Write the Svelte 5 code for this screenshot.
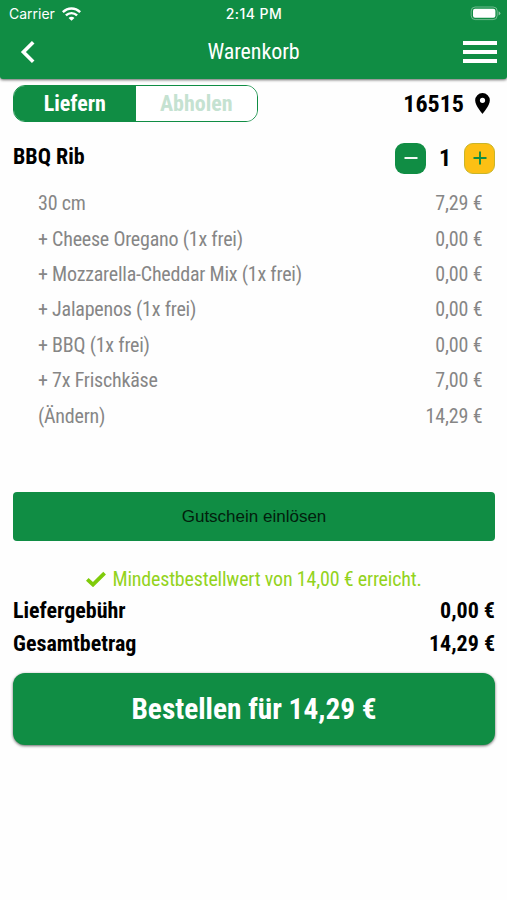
<script>
    let mode = 'LIEFERN';
    let count = 1;

    const positions = [
        { name: '30 cm', price: '7,29 €' },
        { name: '+ Cheese Oregano (1x frei)', price: '0,00 €' },
        { name: '+ Mozzarella-Cheddar Mix (1x frei)', price: '0,00 €' },
        { name: '+ Jalapenos (1x frei)', price: '0,00 €' },
        { name: '+ BBQ (1x frei)', price: '0,00 €' },
        { name: '+ 7x Frischkäse', price: '7,00 €' },
        { name: '(Ändern)', price: '14,29 €' }
    ];

    function selectMode(value) {
        mode = value;
    }
</script>

<div class="screen">
    <header>
        <div class="status-bar">
            <div class="carrier">
                <span>Carrier</span>
                <svg width="19" height="14" viewBox="0 0 18 13" fill="none" stroke="#fff" stroke-width="2.3">
                    <path d="M0.8 4.8C5.5 0.1 12.5 0.1 17.2 4.8" />
                    <path d="M3.7 7.9C6.8 4.9 11.2 4.9 14.3 7.9" />
                    <path d="M9 13L6.2 10.2C7.8 8.7 10.2 8.7 11.8 10.2Z" fill="#fff" stroke="none" />
                </svg>
            </div>
            <span class="time">2:14 PM</span>
            <svg class="battery" width="31" height="15" viewBox="0 0 31 15">
                <rect x="1.2" y="1" width="26" height="12.6" rx="4" fill="none" stroke="#fff" stroke-opacity="0.4" />
                <rect x="3" y="2.8" width="22.4" height="9" rx="2" fill="#fff" />
                <path d="M28.6 5.2Q30.4 6 30.4 7.3T28.6 9.4Z" fill="#fff" fill-opacity="0.5" />
            </svg>
        </div>
        <nav>
            <svg class="back" width="16" height="24" viewBox="0 0 16 24">
                <path d="M13.2 2.2L3.4 12L13.2 21.8" fill="none" stroke="#fff" stroke-width="3.6" />
            </svg>
            <h1>Warenkorb</h1>
            <div class="menu"><i></i><i></i><i></i></div>
        </nav>
    </header>

    <main>
        <div class="delivery">
            <div class="switch">
                <button class:selected={mode === 'LIEFERN'} on:click={() => selectMode('LIEFERN')}>Liefern</button>
                <button class:selected={mode === 'ABHOLEN'} on:click={() => selectMode('ABHOLEN')}>Abholen</button>
            </div>
            <div class="zip">
                <span>16515</span>
                <svg width="15" height="21" viewBox="0 0 14 20">
                    <path fill-rule="evenodd" d="M7 0A7 7 0 0 0 0 7C0 12.2 7 20 7 20S14 12.2 14 7A7 7 0 0 0 7 0ZM7 4.5A2.5 2.5 0 1 1 7 9.5A2.5 2.5 0 1 1 7 4.5Z" />
                </svg>
            </div>
        </div>

        <div class="item">
            <h2>BBQ Rib</h2>
            <div class="counter">
                <button class="minus" aria-label="Weniger" on:click={() => count = Math.max(0, count - 1)}>
                    <svg width="14" height="14" viewBox="0 0 14 14"><path d="M0.5 7H13.5" stroke="#fff" stroke-width="1.9" /></svg>
                </button>
                <span>{count}</span>
                <button class="plus" aria-label="Mehr" on:click={() => count += 1}>
                    <svg width="14" height="14" viewBox="0 0 14 14"><path d="M0.5 7H13.5M7 0.5V13.5" stroke="#108d44" stroke-width="1.9" /></svg>
                </button>
            </div>
        </div>

        <ul>
            {#each positions as position}
                <li><span class="name">{position.name}</span><span class="price">{position.price}</span></li>
            {/each}
        </ul>

        <button class="voucher">Gutschein einlösen</button>

        <div class="minimum">
            <svg width="20" height="16" viewBox="0 0 20 16">
                <path d="M1.3 8.3L7 13.6L18.6 2.2" fill="none" stroke="#7fcb0a" stroke-width="3.8" />
            </svg>
            <span>Mindestbestellwert von 14,00 € erreicht.</span>
        </div>

        <div class="sum"><span>Liefergebühr</span><span>0,00 €</span></div>
        <div class="sum"><span>Gesamtbetrag</span><span>14,29 €</span></div>

        <button class="order">Bestellen für 14,29 €</button>
    </main>
</div>

<style>
:global(body) {
    background: #fefefe;
}

.screen {
    width: 507px;
    height: 900px;
    overflow: hidden;
    font-family: "Roboto Condensed", Roboto, sans-serif;
    font-stretch: 75%;
    color: #000;
}

button {
    font: inherit;
    border: none;
    padding: 0;
    cursor: pointer;
}

svg {
    display: block;
}

header {
    height: 79px;
    border-radius: 0 0 3px 3px;
    background: #108d44;
    color: #fff;
    box-shadow: 0 1px 3px rgba(0, 0, 0, 0.6);
}

.status-bar {
    display: grid;
    grid-template-columns: 1fr auto 1fr;
    align-items: center;
    height: 27px;
    padding: 0 8px 0 9px;
    font-family: Inter, sans-serif;
    font-stretch: normal;
    font-size: 14px;
}

.carrier {
    display: flex;
    align-items: center;
    gap: 7px;
}

.time {
    font-size: 14px;
    font-weight: 550;
    letter-spacing: 0.45px;
}

.battery {
    justify-self: end;
    margin-right: -2px;
}

nav {
    display: grid;
    grid-template-columns: 1fr auto 1fr;
    align-items: center;
    height: 50px;
    padding: 0 10px;
}

.back {
    margin-left: 10px;
}

h1 {
    margin: 0;
    font-size: 22px;
    font-weight: 400;
    letter-spacing: -0.1px;
    line-height: 24px;
}

.menu {
    display: flex;
    flex-direction: column;
    gap: 5px;
    justify-self: end;
}

.menu i {
    width: 34px;
    height: 4px;
    background: #fff;
}

main {
    padding: 6px 12px 0 13px;
}

.delivery,
.item,
.sum,
li {
    display: flex;
    justify-content: space-between;
    align-items: center;
}

.delivery {
    height: 37px;
}

.switch {
    display: flex;
    box-sizing: border-box;
    width: 245px;
    height: 37px;
    border: 1px solid #108d44;
    border-radius: 12px;
    overflow: hidden;
}

.switch button {
    flex: 1;
    background: #fff;
    color: #c5e2d1;
    font-size: 22px;
    font-weight: 700;
}

.switch .selected {
    background: #108d44;
    color: #fff;
}

.zip {
    display: flex;
    align-items: center;
    gap: 11px;
    padding-right: 5px;
    font-size: 24px;
    font-weight: 700;
}

.item {
    height: 32px;
    margin-top: 20px;
}

h2 {
    margin: 0 0 4px;
    font-size: 22px;
    font-weight: 700;
}

.counter {
    display: flex;
    align-items: center;
    font-size: 24px;
    font-weight: 700;
}

.counter span {
    width: 38px;
    text-align: center;
}

.counter button {
    display: flex;
    justify-content: center;
    align-items: center;
    box-sizing: border-box;
    width: 31px;
    height: 31px;
    border-radius: 9px;
}

.minus {
    background: #108d44;
}

.plus {
    background: #fcc014;
    border: 1px solid #c8b52a;
}

ul {
    list-style: none;
    margin: 11.6px 12.5px 0 25px;
    padding: 0;
}

li {
    height: 35.4px;
    font-size: 20px;
    color: #868686;
}

.name {
    letter-spacing: -0.22px;
}

.price {
    letter-spacing: -0.12px;
}

.voucher {
    width: 100%;
    height: 49px;
    margin-top: 58.6px;
    padding-top: 1px;
    border-radius: 4px;
    background: #108d44;
    color: #02200d;
    font-family: "Liberation Sans", sans-serif;
    font-stretch: normal;
    font-size: 17px;
}

.minimum {
    display: flex;
    justify-content: center;
    align-items: center;
    gap: 6px;
    height: 24px;
    margin: 26px 0 3px;
    color: #93d31c;
    font-size: 20px;
    letter-spacing: -0.19px;
}

.sum {
    height: 33px;
    font-size: 22px;
    font-weight: 700;
}

.order {
    width: 100%;
    height: 72px;
    margin-top: 13px;
    border-radius: 12px;
    background: #108d44;
    color: #fff;
    font-size: 29.3px;
    font-weight: 700;
    box-shadow: 0 1px 3px rgba(0, 0, 0, 0.6);
}
</style>
